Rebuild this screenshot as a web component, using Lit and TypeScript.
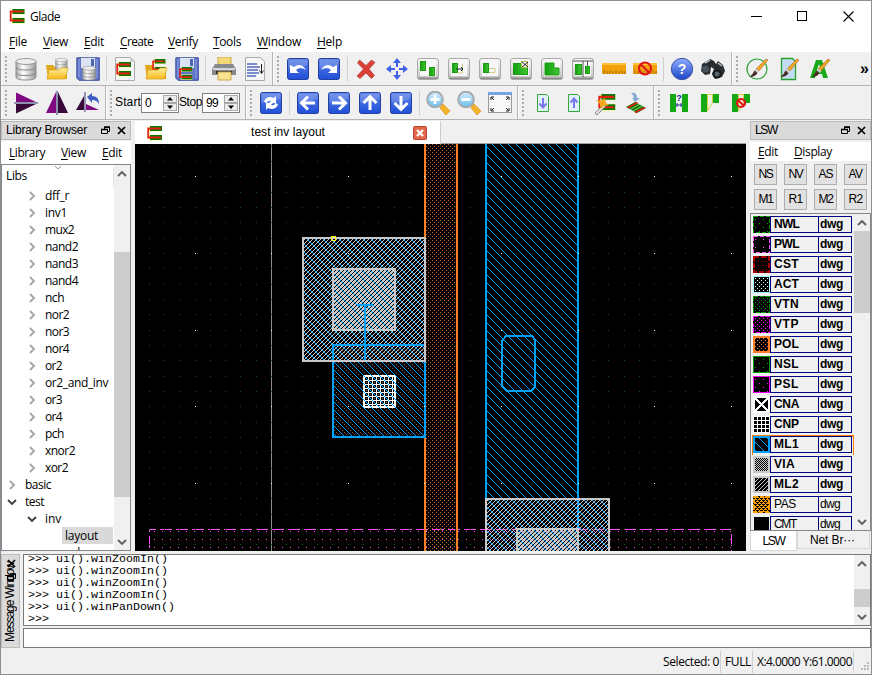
import { LitElement, html, svg, css, nothing } from "lit";
import { customElement } from "lit/decorators.js";

/* ---------- icon artwork, 24 x 24 ---------- */
const blue = (g: unknown) => svg`<rect x="1.5" y="1.5" width="21" height="21" rx="2" fill="url(#blue)" stroke="#2340a0"/><path d="M2.5 2.5h19v5q-9 5-19 4z" fill="#fff" opacity=".17"/>${g}`;
const grey = (g: unknown) => svg`<rect x="1.5" y="1.5" width="21" height="21" rx="2.5" fill="url(#grey)" stroke="#a9a9a9"/><path d="M2 20.5h20v1.5h-20z" fill="#8c8c8c"/><rect x="4" y="4" width="16" height="15" fill="#f7f7f7"/>${g}`;
const chip = (x: number, y: number, s = 1) => svg`<g transform="translate(${x} ${y}) scale(${s})"><path d="M2 0h13v5.500h-13zM2 8.500h13v6h-13z" fill="#ff8"/><path d="M3 0h12v5h-12zM3 9h12v5h-12z" fill="#087808"/><path d="M14 2.500H1.200V11.500H14" fill="none" stroke="#e52010" stroke-width="1.800"/></g>`;
const cyl = (x: number, y: number, s = 1) => svg`<g transform="translate(${x} ${y}) scale(${s})"><path d="M1 3v16q0 3 10 3t10-3V3z" fill="url(#metal)" stroke="#909090"/><ellipse cx="11" cy="3.5" rx="10" ry="3" fill="#eee" stroke="#999"/><path d="M1 9q0 3 10 3t10-3M1 14.500q0 3 10 3t10-3" fill="none" stroke="#858585"/></g>`;
const folder = (g: unknown) => svg`<path d="M1 8h7l2 2h12v12H3z" fill="#e3a71c"/>${g}<path d="M4 13h10l2-2h7l-3 11H2z" fill="url(#gold)" stroke="#dba018" stroke-width=".7"/>`;
const floppy = (g: unknown) => svg`<path d="M.8.800h22.500v22.500H3L.8 21z" fill="#6075c8" stroke="#394f9c"/><rect x="5" y="1" width="14" height="10" fill="#dce3f5"/><path d="M15 2h3v7h-3z" fill="#5065b2"/><path d="M3 2v18M21 2v19" stroke="#8fa0e4"/>${g}`;
const brush = svg`<path d="M21 2l2 1-9 11-3-2z" fill="#f3a52a" stroke="#a86a20" stroke-width=".6"/><path d="M11 11.500l3.500 2.800-2 1.700-3-2.500z" fill="#ccc"/><path d="M9.500 13.500l3 2.500q-2 4-8 4 3-2 5-6.500z" fill="#4c3028"/>`;
const ruler = svg`<path d="M0 6h24v11H0z" fill="#f4a20c"/><path d="M0 6h24v2H0z" fill="#ffc13c"/><path d="M2 17v-4M5 17v-3M8 17v-4M11 17v-3M14 17v-4M17 17v-3M20 17v-4M23 17v-3" stroke="#9b6508" stroke-width=".9"/>`;
const ban = (x: number, y: number, r: number) => svg`<circle cx=${x} cy=${y} r=${r} fill="none" stroke="#e01818" stroke-width="2.200"/><path d="M${x - r * 0.7} ${y - r * 0.7}L${x + r * 0.7} ${y + r * 0.7}" stroke="#e01818" stroke-width="2.200"/>`;
const arrow = (deg: number) => blue(svg`<path transform="rotate(${deg} 12 12)" d="M19 12H6M12 5.500L5.500 12l6.500 6.500" fill="none" stroke="#fff" stroke-width="3"/>`);
const glass = (plus: boolean) => svg`<path d="M15 15l2-2 7 7-4 4-6-7z" fill="#f5b32a" stroke="#d78f14" stroke-width=".7"/><circle cx="9" cy="8.500" r="7.800" fill="url(#lens)" stroke="#a5acae" stroke-width="2"/><path d="M4.500 8.500h9${plus ? "M9 4v9" : ""}" stroke="#fff" stroke-width="2.800"/>`;
const page = (up: boolean) => svg`<path d="M6.500 3.500h9l2 2v15h-11z" fill="#dff0ff" stroke="#37a437"/><path transform="${up ? "rotate(180 12 12)" : ""}" d="M12 7v9M8.500 12.500l3.500 4 3.500-4" fill="none" stroke="#7b79ea" stroke-width="2"/>`;
const box = (x: number, y: number, w: number, h: number) => svg`<rect x=${x} y=${y} width=${w} height=${h} fill="url(#leaf)" stroke="#1a9c10"/>`;

const icons: Record<string, unknown> = {
  db: cyl(1, 1),
  dbOpen: folder(cyl(10, 1, 0.58)),
  dbSave: floppy(cyl(6, 9, 0.64)),
  cellNew: svg`<path d="M2.500.500h15l4 4v19h-19z" fill="#f5f5f5" stroke="#aaa"/><path d="M17 1v4h4z" fill="#ccc"/>${chip(3, 5)}`,
  cellOpen: folder(chip(8, 2, 0.9)),
  cellSave: floppy(chip(4, 10, 0.88)),
  print: svg`<path d="M6 0h13v9H6z" fill="#f4d978" stroke="#c9a84c"/><path d="M3 7h18l3 5v6H0v-6z" fill="#87898e"/><path d="M1 11h22v2H1z" fill="#d5d7da"/><path d="M4 14h16v3H4z" fill="#252628"/><path d="M6 15h13v8H6z" fill="#f8e391" stroke="#c9a84c"/>`,
  text: svg`<path d="M2.500.500h15l4 4v19h-19z" fill="#f6f6f6" stroke="#aaa"/><path d="M4 7h10M4 10h13M4 13h11M4 16h12M4 19h9" stroke="#526ac0" stroke-width="1.300"/><path d="M18.500 7v9M16.500 13.500l2 3 2-3" stroke="#222" fill="none"/>`,
  undo: blue(svg`<path d="M4 8v8h9l-3-3q4-4 10 0-5-8-12-3z" fill="#fff"/>`),
  redo: blue(svg`<path d="M20 8v8h-9l3-3q-4-4-10 0 5-8 12-3z" fill="#fff"/>`),
  del: svg`<path d="M5.500 3l6.500 5.500 5.500-5.500 3.500 2.500-6 6.500 5.500 6.500-3 3-5.500-5.500-6 5.500-3-2.500 6.500-7L3.500 6z" fill="#dc4035" stroke="#ad5149" stroke-width=".8"/>`,
  move: svg`<g fill="#4162e8"><path d="M12 1l4 5h-3v4h-2V6H8zM12 23l4-5h-3v-4h-2v4H8zM1 12l5-4v3h4v2H6v3zM23 12l-5-4v3h-4v2h4v3z"/></g>`,
  copy: grey([box(4.5, 4.5, 5, 9), box(13.5, 10.5, 5, 8)]),
  stretch: grey(svg`${box(5.500, 6.500, 5, 9)}<path d="M15.500 7v9h-5" fill="none" stroke="#c9c980"/><path d="M9 12h7M14 10l2 2-2 2" stroke="#222" fill="none"/>`),
  reshape: grey(svg`${box(5.500, 6.500, 5, 9)}<path d="M11 11.500h6v4h-6" fill="none" stroke="#d2cc88"/>`),
  chop: grey(svg`${box(4.500, 6.500, 14, 11)}<rect x="12.500" y="4.500" width="6" height="6" fill="#fff" stroke="#bcbc55"/><path d="M13 5l6 5M19 5l-6 5" stroke="#222"/>`),
  merge: grey(svg`<path d="M5 6h9v5h5v7H5z" fill="url(#leaf)" stroke="#1a9c10"/>`),
  align: grey(svg`${box(4.500, 7.500, 6, 10)}${box(14.500, 9.500, 4, 7)}<path d="M2 4h20M12 4v16M16.500 4v5" stroke="#555"/>`),
  ruler,
  rulerOff: svg`${ruler}${ban(12, 11.5, 6)}`,
  help: svg`<circle cx="12" cy="12" r="10.700" fill="url(#orb)" stroke="#4054a5"/><text x="12" y="17" text-anchor="middle" font-family="Liberation Sans" font-weight="bold" font-size="14" fill="#fff">?</text>`,
  find: svg`<path d="M1 7l8-5 4 2 2 3 2-3 5 4 2 6-3 6-7 2-3-5 2-5-3-2-1 7-5 1-4-4z" fill="#292d30"/><circle cx="4.500" cy="12" r="3.500" fill="#485158"/><circle cx="16" cy="17" r="4.500" fill="#15191c"/><circle cx="16" cy="17" r="2.500" fill="#59656e"/><path d="M4 6l5-3M17 6l4 3" stroke="#b9bfc2" stroke-width="1.500"/>`,
  ring: svg`<circle cx="12" cy="12" r="10" fill="none" stroke="#28a338" stroke-width="1.200"/>${brush}`,
  sheet: svg`<path d="M5.500 1.500h11l3 3v18h-14z" fill="#c3dcf2" stroke="#25a02c" stroke-width="1.300"/>${brush}`,
  letter: svg`<path d="M3 21L9 3h6l6 18h-5l-1-4H9l-1 4zM10 13h4l-2-6z" fill="#18a818"/>${brush}`,
  flipY: svg`<path d="M2 1.500L22 11H2z" fill="#800880"/><path d="M2 13h20L2 22.500z" fill="#380838"/><path d="M0 12h24" stroke="#8b91ad" stroke-width="2"/>`,
  flipX: svg`<path d="M11 1v21H1z" fill="#800880"/><path d="M13 1v21h10z" fill="#380838"/><path d="M12 0v24" stroke="#8b91ad" stroke-width="2"/>`,
  rotate: svg`<path d="M8 5v14H0z" fill="#380838"/><path d="M10 13v6h13z" fill="#800880"/><path d="M9 1v20" stroke="#5c638f" stroke-width="1.300"/><path d="M11 6l5-4v3q7 0 7 8-2-4-7-4v3z" fill="#3f5fc4"/>`,
  refresh: blue(svg`<path d="M5 11q1-5 7-5l3 1 2-2v7h-7l2-2q-4-1-4 2zM19 13q-1 5-7 5l-3-1-2 2v-7h7l-2 2q4 1 4-2z" fill="#fff"/>`),
  left: arrow(0), right: arrow(180), up: arrow(90), down: arrow(-90),
  zin: glass(true), zout: glass(false),
  fit: svg`<rect x=".5" y="1.500" width="23" height="20" fill="#fafafa" stroke="#999"/><path d="M0 1h24v3H0z" fill="#75a4e4"/><path d="M3 9V6h3M3 6l3 3M21 9V6h-3M21 6l-3 3M3 17v3h3M3 20l3-3M21 17v3h-3M21 20l-3-3" stroke="#222" fill="none"/>`,
  pageDown: page(false), pageUp: page(true),
  wand: svg`${chip(5, 3, 1.15)}<path d="M2 22l9-9 2 2-9 9z" fill="#ddd" stroke="#666" stroke-width=".7"/><path d="M3 9l5 1 4-3 1 5 3 2-5 1-3 3-1-5z" fill="#f4a91f"/>`,
  drop: svg`<path d="M2 16l9-5 11 6-9 5z" fill="#087808"/><path d="M3.500 17l10-5.500M11 21.500l10-5" stroke="#e52010" stroke-width="1.700"/><path d="M6 18.500l10-5.500M9 20l10-5.500" stroke="#a9e080" stroke-width=".8"/><path d="M7 2q6-1 6 5h3l-5 4-3-4h2q0-3-3-5z" fill="#86a9d8"/>`,
  gapQ: svg`<path d="M3 3h6v18H3zM15 3h6v18h-6z" fill="#14a814"/><path d="M9 14h6M10 12v4M14 12v4" stroke="#2330a0"/><text x="12" y="10" text-anchor="middle" font-family="Liberation Sans" font-weight="bold" font-size="9" fill="#1c2795">?</text>`,
  gap: svg`<path d="M3 3h6v18H3zM15 3h6v9h-6z" fill="#14a814"/><path d="M9.500 3.500h5v8L9.500 20z" fill="#eef3e8" stroke="#d2cc45"/>`,
  gapOff: svg`<path d="M3 3h6v18H3zM15 3h6v9h-6z" fill="#14a814"/><path d="M9.500 3.500h5v8L9.500 20z" fill="#eef3e8" stroke="#d2cc45"/>${ban(12, 12, 4)}`,
};

type Strip = { w: number; items: string[] };
const topStrips: Strip[] = [
  { w: 272, items: ["db", "dbOpen", "dbSave", "|", "cellNew", "cellOpen", "cellSave", "|", "print", "text"] },
  { w: 459, items: ["undo", "redo", "|", "del", "move", "copy", "stretch", "reshape", "chop", "merge", "align", "ruler", "rulerOff", "|", "help", "find"] },
  { w: 0, items: ["ring", "sheet", "letter"] },
];
const lowStrips: Strip[] = [
  { w: 105, items: ["flipY", "flipX", "rotate"] },
  { w: 140, items: ["spin"] },
  { w: 272, items: ["refresh", "|", "left", "right", "up", "down", "|", "zin", "zout", "fit"] },
  { w: 136, items: ["pageDown", "pageUp", "wand", "drop"] },
  { w: 0, items: ["gapQ", "gap", "gapOff"] },
];

const menus: [string, number, number][] = [
  ["File", 34, 18], ["View", 41, 25], ["Edit", 36, 20], ["Create", 48, 33],
  ["Verify", 45, 30], ["Tools", 44, 28], ["Window", 60, 44], ["Help", 40, 25],
];

/* name, depth, state, label width */
const tree: [string, number, string, number][] = [
  ["dff_r", 1, ">", 24], ["inv1", 1, ">", 22], ["mux2", 1, ">", 29], ["nand2", 1, ">", 33], ["nand3", 1, ">", 33],
  ["nand4", 1, ">", 33], ["nch", 1, ">", 19], ["nor2", 1, ">", 24], ["nor3", 1, ">", 24], ["nor4", 1, ">", 24],
  ["or2", 1, ">", 17], ["or2_and_inv", 1, ">", 63], ["or3", 1, ">", 17], ["or4", 1, ">", 17], ["pch", 1, ">", 19],
  ["xnor2", 1, ">", 30], ["xor2", 1, ">", 23], ["basic", 0, ">", 26], ["test", 0, "v", 19], ["inv", 1, "v", 16],
  ["layout", 2, "", 33], ["nch", 2, "", 19],
];

/* name, fill, outline, dash, line width */
const layers: [string, string, string, string, number][] = [
  ["NWL", "p-nwl", "#00a000", "4 2", 1], ["PWL", "p-pwl", "#ff50ff", "4 2", 1], ["CST", "p-cst", "#b00000", "5 2", 2],
  ["ACT", "p-act", "#a0ffff", "", 1], ["VTN", "p-vtn", "#00a000", "4 2", 1], ["VTP", "p-vtp", "#ff00ff", "4 2", 1],
  ["POL", "p-pol", "#ff7f27", "", 2], ["NSL", "p-nwl", "#00a000", "", 1], ["PSL", "p-psl", "#ff00ff", "", 1],
  ["CNA", "cross", "#fff", "", 2], ["CNP", "p-grid", "#fff", "", 1], ["ML1", "p-ml1", "#00a0ff", "", 2],
  ["VIA", "p-via", "#c8c8c8", "", 2], ["ML2", "p-ml2w", "#c8c8c8", "", 2], ["PAS", "p-pas", "#ffa000", "4 2", 2],
  ["CMT", "", "#f0f0f0", "", 1],
];

const chev = (d: string, c = "#606060") => {
  const p: Record<string, string> = { up: "M1 7l4-4 4 4", down: "M1 3l4 4 4-4", right: "M3 1l4 4-4 4" };
  return html`<svg width="10" height="10"><path d=${p[d]} fill="none" stroke=${c} stroke-width="1.9"/></svg>`;
};
const fit = (s: string, w: number) => html`<span class="fit" data-w=${w}>${s}</span>`;
const mnem = (s: string, w: number) => html`<span class="fit" data-w=${w}><u>${s[0]}</u>${s.slice(1)}</span>`;
const restore = svg`<path d="M3.500 3V1.500h5v4H7M.5 3.500h6v4h-6z" fill="none" stroke="#000"/><path d="M3 1h6M0 3.500h7" stroke="#000" stroke-width="1.600"/>`;
const cross = svg`<path d="M1 1l7 7M8 1l-7 7" stroke="#000" stroke-width="1.700"/>`;

@customElement("app-root")
export class AppRoot extends LitElement {
  static styles = css`
    :host { display: block; width: 872px; height: 675px; overflow: hidden; }
    * { box-sizing: border-box; }
    svg { display: block; flex: none; }
    .defs { position: absolute; }
    .win { width: 872px; height: 675px; border: 1px solid #8f8f8f; background: #f0f0f0; display: flex; flex-direction: column;
      font: 12px/17px "Open Sans", "Noto Sans", sans-serif; color: #000; white-space: nowrap; }
    .gothic { font-family: "Liberation Sans", sans-serif; font-size: 12px; }
    .title { height: 30px; background: #fff; display: flex; align-items: center; padding-left: 8px; flex: none; }
    .title .name { flex: 1; padding-left: 5px; }
    .title .ctl { width: 46px; display: flex; justify-content: center; }
    .title .ctl:last-child { width: 46px; }
    .menu { height: 21px; background: #fff; display: flex; align-items: center; padding-left: 8px; flex: none; }
    u { text-underline-offset: 2px; text-decoration-thickness: 1px; }
    .bar { height: 34px; display: flex; border-bottom: 1px solid #b4b4b4; flex: none; }
    .strip { display: flex; align-items: center; border-right: 1px solid #b4b4b4; border-left: 1px solid #fcfcfc; flex: none; }
    .strip:last-child { flex: 1; border-right: 0; }
    .grip { width: 3px; height: 26px; margin: 0 2px 0 3px; flex: none;
      background: radial-gradient(circle at 1px 1px, #aaa 1px, transparent 1.3px) 0 0 / 3px 4px; }
    .tool { width: 31px; display: flex; justify-content: center; flex: none; }
    .sep { width: 1px; height: 24px; background: #cfcfcf; margin: 0 2.5px; flex: none; }
    .more { margin-left: auto; padding-right: 2px; font: 700 16px/20px "Liberation Sans", sans-serif; }
    .spins { display: flex; align-items: center; }
    .spin { width: 38px; height: 20px; border: 1px solid #808080; background: #fff; display: flex; padding: 1px 1px 1px 3px; justify-content: space-between; line-height: 17px; }
    .updn { width: 14px; display: flex; flex-direction: column; }
    .updn i { flex: 1; background: #ececec; border: 1px solid #aaa; display: flex; justify-content: center; align-items: center; }
    .main { height: 432px; display: flex; padding-top: 1px; flex: none; }
    .dock { display: flex; flex-direction: column; width: 130px; flex: none; }
    .dock.right { width: 121px; margin-left: 4px; }
    .cap { height: 19px; background: #dadada; border: 1px solid #bcbcbc; display: flex; align-items: center; gap: 7px; padding: 0 4px; flex: none; }
    .cap .fit { margin-right: auto; }
    .submenu { height: 23px; margin-top: 1px; background: #fff; display: flex; align-items: center; padding-left: 8px; flex: none; }
    .right .submenu { height: 19px; margin-top: 2px; }
    .tree { flex: 1; background: #fff; border: 1px solid #828790; display: flex; min-height: 0; margin-bottom: 1px; }
    .nodes { flex: 1; overflow: hidden; padding-top: 2px; }
    .head { height: 20px; display: flex; padding-left: 4px; position: relative; border-right: 1px solid #e3e3e3; }
    .head svg { position: absolute; left: 51px; top: -3px; }
    .node { display: flex; height: 17px; align-items: center; }
    .node .tog { width: 10px; margin-right: 5px; display: flex; }
    .node .lbl { padding: 0 3px; }
    .d0 { padding-left: 5px; } .d1 { padding-left: 25px; } .d2 { padding-left: 45px; }
    .sel .lbl { background: #d9d9d9; width: 51px; }
    .sb { width: 16px; background: #f0f0f0; display: flex; flex-direction: column; align-items: center; padding: 4px 0 3px; flex: none; }
    .sb b { width: 100%; background: #cdcdcd; }
    .sb svg:last-child { margin-top: auto; }
    .mid { width: 611px; margin-left: 4px; display: flex; flex-direction: column; flex: none; }
    .tabs { height: 23px; display: flex; border-bottom: 1px solid #a0a0a0; flex: none; }
    .tab { width: 306px; height: 23px; background: #fff; border-right: 1px solid #ccc; display: flex; align-items: center; padding-left: 12px; }
    .tab .fit { margin-left: 88px; margin-right: 88px; }
    .keys { display: grid; grid-template-columns: repeat(4, 23px); column-gap: 7px; row-gap: 4px; padding: 3px 0 3px 4px; flex: none; }
    .key { height: 21px; background: #e1e1e1; border: 1px solid #adadad; display: flex; justify-content: center; align-items: center; }
    .layers { height: 318px; border: 1px solid #828790; display: flex; flex: none; }
    .rows { width: 103px; overflow: hidden; padding: 1px 0 0 1px; display: flex; flex-direction: column; flex: none; }
    .row { height: 20px; display: flex; flex: none; padding: 1px 0 2px 1px; width: 102px; }
    .cell { border: 1px solid #000080; height: 17px; width: 49px; padding-left: 3px; display: flex; align-items: center; font-weight: 700; }
    .cell + .cell { width: 33px; border-left: 0; padding-left: 1px; }
    .thin .cell { font-weight: 400; }
    .hot { box-shadow: inset 0 2px #ff7f00, inset -1px 0 #ff7f00, inset 1px 0 #ff7f00; }
    .btabs { display: flex; height: 20px; flex: none; }
    .btabs div { border: 1px solid #d9d9d9; border-top: 0; text-align: center; }
    .btabs .on { width: 47px; background: #fff; line-height: 20px; }
    .btabs .off { width: 73px; height: 18px; padding-left: 12px; text-align: left; line-height: 18px; }
    .msg { height: 94px; margin-top: 2px; display: flex; gap: 3px; flex: none; }
    .side { width: 19px; background: #dadada; border: 1px solid #bcbcbc; position: relative; }
    .side .v { writing-mode: vertical-rl; transform: rotate(180deg); position: absolute; left: 0; bottom: 5px; }
    .side svg { position: absolute; left: 5px; top: 4px; }
    .side svg + svg { top: 18px; }
    .col { flex: 1; display: flex; flex-direction: column; gap: 2px; }
    .log { height: 72px; border: 1px solid #7a7a7a; background: #fff; display: flex; overflow: hidden; }
    .lines { flex: 1; font: 11.67px/12px "Liberation Mono", monospace; display: flex; flex-direction: column; justify-content: flex-end; padding: 0 0 0 4px; min-height: 0; }
    .lines div { white-space: pre; flex: none; height: 12px; }
    .cmd { height: 20px; border: 1px solid #7a7a7a; background: #fff; }
    .status { flex: 1; display: flex; justify-content: flex-end; align-items: center; padding: 2px 1px 0 0; }
    .status > span { height: 22px; line-height: 21px; border-right: 1px solid #d0d0d0; padding: 0 1px 0 4px; }
    .status svg { align-self: flex-end; margin: 0 0 2px 6px; }
  `;

  firstUpdated() {
    this.renderRoot.querySelectorAll<HTMLElement>(".fit").forEach((el) => {
      const want = Number(el.dataset.w);
      const box = el.getBoundingClientRect();
      const has = Math.max(box.width, el.closest(".v") ? box.height : 0);
      const n = (el.textContent ?? "").length;
      el.style.letterSpacing = `${(want - has) / n}px`;
    });
  }

  defs() {
    const dots = (id: string, s: number, c: string, pts: number[][]) =>
      svg`<pattern id=${id} width=${s} height=${s} patternUnits="userSpaceOnUse">${pts.map(([x, y]) => svg`<rect x=${x} y=${y} width="1" height="1" fill=${c}/>`)}</pattern>`;
    const grad = (id: string, a: string, b: string) =>
      svg`<linearGradient id=${id} x1="0" y1="0" x2="0" y2="1"><stop offset="0" stop-color=${a}/><stop offset="1" stop-color=${b}/></linearGradient>`;
    const diag = [0, 1, 2, 3, 4, 5, 6, 7];
    return html`<svg class="defs" width="0" height="0" shape-rendering="crispEdges"><defs>
      ${grad("blue", "#5b80e6", "#1f4fd8")}${grad("grey", "#fafafa", "#c0c0c0")}${grad("gold", "#fff09a", "#f6b91c")}
      ${grad("lens", "#d5efff", "#6dbdec")}${grad("orb", "#8fb0ff", "#1c44c8")}
      <linearGradient id="leaf"><stop offset="0" stop-color="#10a010"/><stop offset="1" stop-color="#45c535"/></linearGradient>
      <linearGradient id="metal"><stop offset="0" stop-color="#aaa"/><stop offset=".35" stop-color="#fff"/><stop offset="1" stop-color="#999"/></linearGradient>
      ${dots("p-ml1", 8, "#00a0ff", diag.map((i) => [(i + 4) % 8, i]))}
      ${dots("p-ml2", 4, "#c8c8c8", [[0, 3], [1, 2], [2, 1], [3, 0]])}
      ${dots("p-via", 2, "#c8c8c8", [[0, 0], [1, 1]])}
      ${dots("p-pol", 4, "#ff7f27", [[0, 0], [2, 2]])}
      ${dots("p-act", 4, "#c0ffff", [[0, 0], [2, 2]])}
      ${dots("p-vtn", 4, "#00a000", [[0, 0], [2, 2]])}
      ${dots("p-vtp", 4, "#ff00ff", [[0, 0], [2, 2]])}
      ${dots("p-nwl", 8, "#00a000", [[2, 3], [6, 7]])}
      ${dots("p-pwl", 8, "#ff50ff", [[2, 3]])}
      ${dots("p-psl", 8, "#ff00ff", [[2, 3], [6, 7]])}
      ${dots("p-cst", 4, "#b00000", [[1, 1]])}
      ${dots("p-grid", 4, "#fff", [[0, 0], [1, 0], [2, 0], [3, 0], [0, 1], [0, 2], [0, 3]])}
      ${dots("p-ml2w", 4, "#c8c8c8", [[0, 3], [1, 2], [2, 1], [3, 0]])}
      ${dots("p-pas", 4, "#ffa000", [[0, 0], [1, 1], [2, 2], [3, 3], [3, 1], [1, 3], [0, 1], [2, 3]])}
    </defs></svg>`;
  }

  strip(s: Strip, more = false) {
    return html`<div class="strip" style=${s.w ? `width:${s.w}px` : ""}><span class="grip"></span>
      ${s.items.map((n) => n === "|" ? html`<span class="sep"></span>`
        : n === "spin" ? this.spins()
        : html`<span class="tool"><svg width="24" height="24" viewBox="0 0 24 24">${icons[n]}</svg></span>`)}
      ${more ? html`<span class="more">»</span>` : nothing}</div>`;
  }

  spins() {
    const one = (v: string, w: number) => html`<span class="spin">${fit(v, w)}<span class="updn">
      <i><svg width="6" height="4"><path d="M0 3.500L3 0l3 3.500z"/></svg></i><i><svg width="6" height="4"><path d="M0 .5L3 4 6 .5z"/></svg></i></span></span>`;
    return html`<span class="spins gothic">${fit("Start", 26)}${one("0", 6)}${fit("Stop", 23)}${one("99", 12)}</span>`;
  }

  swatch([, fill, line, dash, w]: (typeof layers)[number]) {
    return html`<svg width="17" height="17" shape-rendering="crispEdges"><rect width="17" height="17"/>
      ${fill === "cross" ? svg`<path d="M2 2l13 13M15 2L2 15" stroke="#fff" stroke-width="2.500"/>` : fill ? svg`<rect width="17" height="17" fill="url(#${fill})"/>` : nothing}
      <rect x=${w / 2} y=${w / 2} width=${17 - w} height=${17 - w} fill="none" stroke=${line} stroke-width=${w} stroke-dasharray=${dash}/></svg>`;
  }

  canvas() {
    const shape = (x: number, y: number, x2: number, y2: number, p: string, c: string) =>
      svg`<rect x=${x + 1} y=${y + 1} width=${x2 - x - 2} height=${y2 - y - 2} fill=${p ? `url(#${p})` : "none"} stroke=${c} stroke-width="2"/>`;
    const area = (x: number, y: number, x2: number, y2: number, p: string, o = 1) =>
      svg`<rect x=${x} y=${y} width=${x2 - x} height=${y2 - y} fill="url(#${p})" opacity=${o}/>`;
    let minor = "", major = "";
    for (let i = -3; i <= 35; i++)
      for (let j = -2; j <= 24; j++) {
        const d = `M${Math.floor(195 + i * 15.33)} ${Math.round(176.3 + j * 15.335)}h1v1h-1z`;
        if (i % 5 === 0 && j % 5 === 0) major += d; else minor += d;
      }
    return html`<svg width="611" height="407" viewBox="135 144 611 407" shape-rendering="crispEdges">
      <rect x="135" y="144" width="611" height="407"/>
      <path d="M271.500 144v407" stroke="#8c8c8c"/>
      <rect x="149.500" y="529.500" width="582" height="40" fill="url(#p-pwl)" stroke="#ff50ff" stroke-dasharray="12 4" stroke-dashoffset="6"/>
      <path d=${minor} fill="#006400"/>
      ${area(426, 144, 456, 551, "p-pol", 0.8)}
      <path d="M425 144v407M457 144v407" stroke="#ff7f27" stroke-width="2"/>
      ${area(332, 344, 426, 438, "p-pol", 0.6)}
      ${area(302, 237, 426, 362, "p-ml2")}${area(302, 237, 426, 362, "p-ml1")}
      ${area(332, 268, 396, 331, "p-via")}${area(332, 268, 396, 331, "p-ml1")}
      ${area(363, 375, 396, 408, "p-grid")}
      ${shape(363, 375, 396, 408, "", "#fff")}
      ${shape(332, 344, 426, 438, "p-ml1", "#00a0ff")}
      ${shape(302, 237, 426, 362, "", "#c8c8c8")}
      ${shape(332, 268, 396, 331, "", "#c8c8c8")}
      <path d="M365 304v56M357 305h16" stroke="#00a0ff" stroke-width="2"/>
      <rect x="331.500" y="236.500" width="4" height="4" fill="none" stroke="#ff0"/>
      ${area(486, 144, 578, 499, "p-ml1")}
      <path d="M486 144v355M578 144v386" stroke="#00a0ff" stroke-width="2"/>
      <path d="M506 336h26l3 4v47l-4 4h-24l-5-5v-45z" fill="none" stroke="#00a0ff" stroke-width="2"/>
      ${area(485, 498, 610, 551, "p-ml2")}${area(485, 498, 610, 551, "p-ml1")}
      ${area(516, 528, 579, 551, "p-via")}${area(516, 528, 579, 551, "p-ml1")}
      ${shape(485, 498, 610, 570, "", "#c8c8c8")}${shape(516, 528, 579, 570, "", "#c8c8c8")}
      <path d=${major} fill="#fff"/>
    </svg>`;
  }

  cap(s: string, w: number) {
    return html`<div class="cap gothic">${fit(s, w)}<svg width="9" height="9">${restore}</svg><svg width="9" height="9">${cross}</svg></div>`;
  }

  render() {
    return html`${this.defs()}
    <div class="win">
      <div class="title"><svg width="16" height="16">${chip(0.5, 1)}</svg><span class="name">${fit("Glade", 30)}</span>
        <span class="ctl"><svg width="11" height="11"><path d="M0 5.500h11" stroke="#000"/></svg></span>
        <span class="ctl"><svg width="11" height="11"><rect x=".5" y=".5" width="9" height="9" fill="none" stroke="#000"/></svg></span>
        <span class="ctl"><svg width="11" height="11"><path d="M.5.500l10 10M10.500.500l-10 10" stroke="#000" stroke-width="1.100"/></svg></span></div>
      <div class="menu">${menus.map(([s, w, t]) => html`<span style="width:${w}px">${mnem(s, t)}</span>`)}</div>
      <div class="bar">${topStrips.map((s, i) => this.strip(s, i === 2))}</div>
      <div class="bar">${lowStrips.map((s) => this.strip(s))}</div>
      <div class="main">
        <div class="dock">
          ${this.cap("Library Browser", 81)}
          <div class="submenu">${[["Library", 52, 36], ["View", 41, 25], ["Edit", 25, 20]].map(([s, w, t]) => html`<span style="width:${w}px">${mnem(s as string, t as number)}</span>`)}</div>
          <div class="tree"><div class="nodes">
            <div class="head">${fit("Libs", 21)}<svg width="10" height="8"><path d="M2 2l3 3 3-3" fill="none" stroke="#999"/></svg></div>
            ${tree.map(([s, d, t, w]) => html`<div class="node d${d} ${s === "layout" ? "sel" : ""}"><span class="tog">${t ? chev(t === ">" ? "right" : "down", t === ">" ? "#a6a6a6" : "#404040") : nothing}</span><span class="lbl">${fit(s, w)}</span></div>`)}
          </div><div class="sb">${chev("up")}<b style="height:245px;margin-top:73px"></b>${chev("down")}</div></div>
        </div>
        <div class="mid">
          <div class="tabs"><div class="tab gothic"><svg width="16" height="16">${chip(0, 1)}</svg>${fit("test inv layout", 74)}
            <svg width="14" height="14"><rect x=".5" y=".5" width="13" height="13" rx="1" fill="#e0684f" stroke="#b8402c"/><path d="M4 4l6 6M10 4l-6 6" stroke="#fff" stroke-width="2.200"/></svg></div></div>
          ${this.canvas()}
        </div>
        <div class="dock right">
          ${this.cap("LSW", 22)}
          <div class="submenu">${[["Edit", 36, 20], ["Display", 50, 38]].map(([s, w, t]) => html`<span style="width:${w}px">${mnem(s as string, t as number)}</span>`)}</div>
          <div class="keys gothic">${["NS", "NV", "AS", "AV", "M1", "R1", "M2", "R2"].map((k) => html`<span class="key">${fit(k, 14)}</span>`)}</div>
          <div class="layers"><div class="rows gothic">
            ${layers.map((l, i) => html`<div class="row ${i > 13 ? "thin" : ""} ${l[0] === "ML1" ? "hot" : ""}">${this.swatch(l)}<span class="cell">${fit(l[0], i > 13 ? 22 : l[0] === "VIA" ? 21 : 25)}</span><span class="cell">${fit("dwg", i > 13 ? 20 : 23)}</span></div>`)}
          </div><div class="sb">${chev("up")}<b style="height:82px;margin-top:3px"></b>${chev("down")}</div></div>
          <div class="btabs gothic"><div class="on">${fit("LSW", 22)}</div><div class="off">${fit("Net Br···", 45)}</div></div>
        </div>
      </div>
      <div class="msg">
        <div class="side gothic"><span class="v">${fit("Message Window", 80)}</span><svg width="9" height="9">${cross}</svg><svg width="9" height="9">${restore}</svg></div>
        <div class="col">
          <div class="log"><div class="lines">${["winZoomIn", "winZoomIn", "winZoomIn", "winZoomIn", "winPanDown"].map((c) => html`<div>>>> ui().${c}()</div>`)}<div>>>></div></div>
            <div class="sb">${chev("up")}<b style="height:18px;margin-top:20px"></b>${chev("down")}</div></div>
          <div class="cmd"></div>
        </div>
      </div>
      <div class="status"><span>${fit("Selected: 0", 56)}</span><span>${fit("FULL", 26)}</span><span>${fit("X:4.0000 Y:61.0000", 95)}</span>
        <svg width="10" height="10"><path d="M7 0h2v2H7zM4 3h2v2H4zM7 3h2v2H7zM1 6h2v2H1zM4 6h2v2H4zM7 6h2v2H7z" fill="#bbb"/></svg></div>
    </div>`;
  }
}
